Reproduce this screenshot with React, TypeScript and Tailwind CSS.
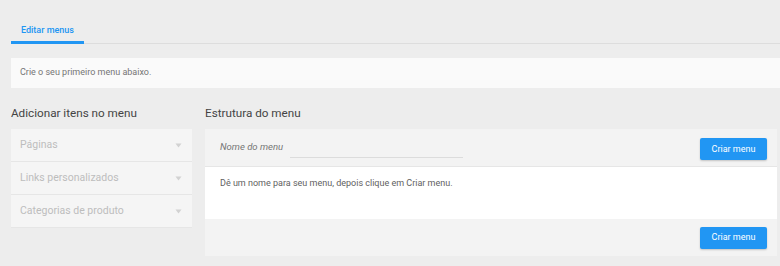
import React from "react";

function Caret() {
  return (
    <svg width="7" height="5" viewBox="0 0 7 5" className="shrink-0">
      <path d="M0.5 0.5 L6.5 0.5 L3.5 4.5 Z" fill="#d2d2d2" />
    </svg>
  );
}

function Btn() {
  return (
    <button className="h-[22px] w-[67px] rounded-[2px] bg-[#2196f3] text-[9px] text-white shadow-[0_1px_2px_rgba(0,0,0,0.2)]">
      Criar menu
    </button>
  );
}

export default function App() {
  return (
    <div
      className="h-[266px] w-[780px] overflow-hidden bg-[#ededed] pl-[11px]"
      style={{ fontFamily: "Roboto, 'Liberation Sans', sans-serif" }}
    >
      <div className="mt-[19px] flex border-b border-[#dddddd]">
        <div className="-mb-px border-b-[3px] border-[#2196f3] px-[10px] pb-[4px] pt-[4px] text-[9px] font-medium leading-[14px] text-[#2196f3]">
          Editar menus
        </div>
      </div>

      <div className="mt-[14px] flex h-[30px] items-center bg-[#fafafa] px-[9px] text-[9px] text-[#757575]">
        Crie o seu primeiro menu abaixo.
      </div>

      <div className="mt-[17px] flex gap-[13px]">
        <div className="w-[181px]">
          <div className="text-[11.7px] leading-[16px] text-[#444]">Adicionar itens no menu</div>
          <div className="mt-[8px] flex flex-col gap-px">
            {["Páginas", "Links personalizados", "Categorias de produto"].map((t) => (
              <div
                key={t}
                className="flex h-[32px] items-center justify-between bg-[#f5f5f5] pl-[9px] pr-[10px] text-[10.5px] text-[#bdbdbd] shadow-[0_1px_0_#e6e6e6]"
              >
                <span>{t}</span>
                <Caret />
              </div>
            ))}
          </div>
        </div>

        <div className="w-[572px]">
          <div className="text-[11.7px] leading-[16px] text-[#444]">Estrutura do menu</div>
          <div className="mt-[8px]">
            <div className="flex h-[38px] items-center border-b border-[#e6e6e6] bg-[#f3f3f3] pl-[15px] pr-[10px]">
              <span className="text-[9.5px] italic text-[#757575]">Nome do menu</span>
              <div className="ml-[7px] mt-[8px] h-[12px] w-[173px] border-b border-[#dcdcdc]" />
              <div className="ml-auto">
                <Btn />
              </div>
            </div>
            <div className="h-[52px] bg-white pl-[15px] pt-[9px] text-[9px] leading-[14px] text-[#616161]">
              Dê um nome para seu menu, depois clique em Criar menu.
            </div>
            <div className="flex h-[37px] items-center justify-end bg-[#f3f3f3] pr-[10px]">
              <Btn />
            </div>
          </div>
        </div>
      </div>
    </div>
  );
}
